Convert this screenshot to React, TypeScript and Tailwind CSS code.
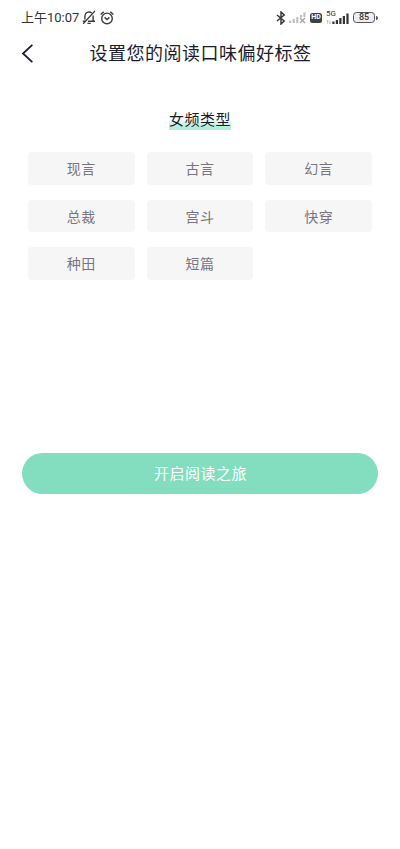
const tags = ["现言", "古言", "幻言", "总裁", "宫斗", "快穿", "种田", "短篇"];

function BellOffIcon() {
  return (
    <svg width="14" height="15" viewBox="0 0 14 15" fill="none" stroke="#3c3c3c" strokeWidth="1.4" className="ml-[3px]">
      <path d="M.8 11.2h2.8M6 11.2h7M2.9 9.6V6.4C2.9 4 4.6 2 7 2c1.1 0 2 .4 2.7 1.1M11.1 5.4v5.8M5.4 13.4h3.4M13 .9L1.2 13.8" />
    </svg>
  );
}

function AlarmIcon() {
  return (
    <svg width="14" height="14" viewBox="0 0 14 14" fill="none" stroke="#3c3c3c" strokeWidth="1.4" className="ml-[4px]">
      <circle cx="7" cy="7.4" r="5.3" />
      <path d="M.6 3.5L3.7.9M13.4 3.5L10.3.9M4.6 6.4L7 8.5l2.4-2.1" />
    </svg>
  );
}

function BluetoothIcon() {
  return (
    <svg width="10" height="14" viewBox="0 0 10 14" fill="none" stroke="#3a3a3a" strokeWidth="1.5">
      <path d="M1 4l7.2 6L5 13V1l3.2 3L1 10" />
    </svg>
  );
}

function NoSignalIcon() {
  return (
    <svg width="17" height="13" viewBox="0 0 17 13" className="ml-[3px]">
      <path d="M0 9.5h2.2V12H0zM3.6 8h2.2v4H3.6zM7.2 6h2.2v6H7.2zM10.9 4h2.2v2.5h-2.2zM14.4 1.5h2.2v4.5h-2.2z" fill="#c0c0c0" />
      <path d="M11 7l5 5M16 7l-5 5" stroke="#a5a5a5" strokeWidth="1.4" />
    </svg>
  );
}

function SignalIcon() {
  return (
    <svg width="24" height="14" viewBox="0 0 24 14" className="absolute left-0 top-0">
      <path d="M6.3 10.5h2.2V13H6.3zM9.8 9H12v4H9.8zM13.3 7h2.2v6h-2.2zM16.8 5H19v8h-2.2zM20.4 2.5h2.2V13h-2.2z" fill="#333" />
      <path d="M1.5 12.5V9.5M.5 10.3l1-1 1 1M4 9.5v3M3 11.7l1 1 1-1" stroke="#aaa" strokeWidth=".7" fill="none" />
    </svg>
  );
}

function StatusBar() {
  return (
    <div className="flex h-[35px] items-center pl-[21px] pr-[22px] text-[#333]">
      <span className="w-[58px] whitespace-nowrap text-[13px] leading-none">上午10:07</span>
      <BellOffIcon />
      <AlarmIcon />
      <div className="ml-auto flex items-center">
        <BluetoothIcon />
        <NoSignalIcon />
        <span className="ml-[4px] flex h-[10px] w-[12px] items-center justify-center rounded-[2.5px] bg-[#3f3f3f] text-[7px] leading-none font-bold text-white">
          HD
        </span>
        <div className="relative ml-[4px] h-[14px] w-[24px]">
          <span className="absolute left-0 -top-[1px] text-[8px] leading-none">5G</span>
          <SignalIcon />
        </div>
        <div className="ml-[3px] flex h-[11px] w-[22px] items-center justify-center rounded-[3.5px] border border-[#555] bg-[#eee] text-[9px] leading-none font-medium">
          85
        </div>
        <div className="ml-px h-1 w-[2px] rounded-r-full bg-[#555]" />
      </div>
    </div>
  );
}

export default function App() {
  return (
    <div className="h-[849px] w-[400px] overflow-hidden bg-white font-['Roboto','Noto_Sans_CJK_SC',sans-serif]">
      <StatusBar />

      {/* 导航栏 */}
      <header className="relative flex h-[36px] items-center justify-center">
        <button className="absolute left-[21px] top-[9px]" aria-label="返回">
          <svg width="13" height="19" viewBox="0 0 13 19" fill="none" stroke="#1c1b2b" strokeWidth="1.8" strokeLinecap="round">
            <path d="M10.8 1.3L2 9.5l8.8 8.2" />
          </svg>
        </button>
        <h1 className="pl-px pt-[2px] text-[18px] leading-none tracking-[0.5px] text-[#1c1b2b]">设置您的阅读口味偏好标签</h1>
      </header>

      <main>
        <div className="mt-[39px] flex justify-center">
          <h2 className="bg-linear-to-b from-transparent from-40% to-[#b4ecda] to-85% text-[15px] leading-[20px] tracking-[0.5px] text-[#1c1b2b]">
            女频类型
          </h2>
        </div>

        {/* 标签列表 */}
        <div className="mt-[22.4px] grid grid-cols-3 gap-x-[12px] gap-y-[15px] px-[28px]">
          {tags.map((tag) => (
            <button key={tag} className="h-[32.5px] rounded-[4px] bg-[#f6f6f7] pt-px text-[14px] leading-none tracking-[0.5px] text-[#777582]">
              {tag}
            </button>
          ))}
        </div>

        <div className="mt-[173.2px] px-[22px]">
          <button className="h-[41px] w-full rounded-full bg-[#82debf] pt-[2px] pl-px text-[15px] leading-none tracking-[0.5px] text-white">
            开启阅读之旅
          </button>
        </div>
      </main>
    </div>
  );
}
